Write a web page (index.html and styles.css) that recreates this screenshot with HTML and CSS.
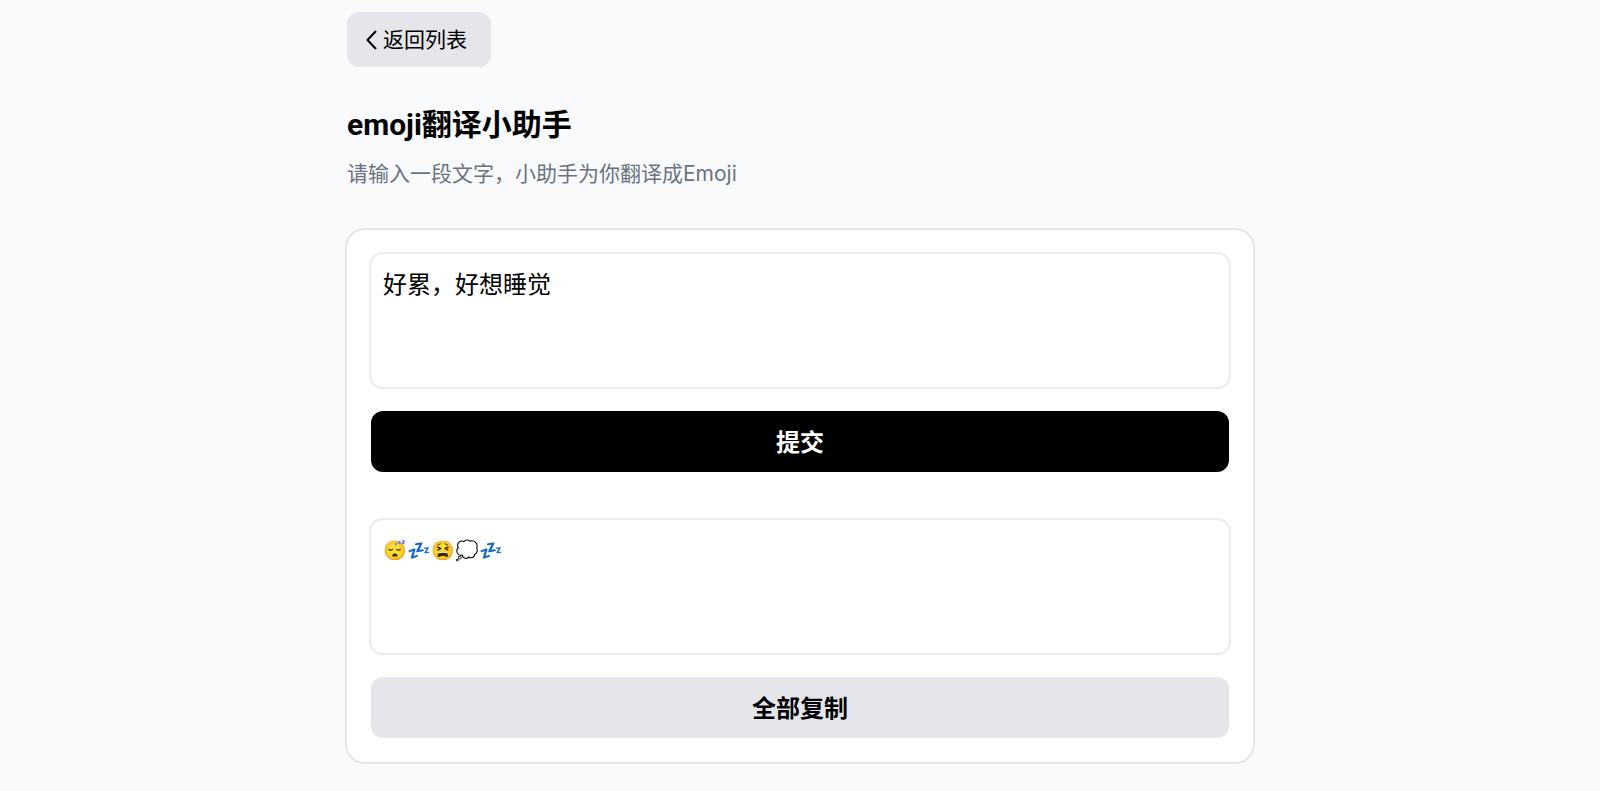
FILE: index.html
```html
<!DOCTYPE html>
<html lang="zh-CN">
<head>
<meta charset="utf-8">
<meta name="viewport" content="width=device-width, initial-scale=1">
<title>emoji翻译小助手</title>
<link rel="stylesheet" href="styles.css">
</head>
<body>
<main class="page">
  <button class="back" type="button">
    <svg class="back-icon" viewBox="0 0 12 20" aria-hidden="true"><path d="M10 1 1.500 10l8.500 9"/></svg>
    <span>返回列表</span>
  </button>
  <header class="intro">
    <h1 class="title">emoji翻译小助手</h1>
    <p class="subtitle">请输入一段文字，小助手为你翻译成Emoji</p>
  </header>
  <form class="card">
    <textarea class="field" aria-label="输入文字">好累，好想睡觉</textarea>
    <button class="action primary" type="button">提交</button>
    <textarea class="field result" aria-label="翻译结果" readonly>😴💤😫💭💤</textarea>
    <button class="action secondary" type="button">全部复制</button>
  </form>
</main>
</body>
</html>
```
FILE: styles.css
```css
* {
  box-sizing: border-box;
}

body {
  margin: 0;
  background: #f9fafc;
  color: #000;
  font-family: Inter, "Noto Sans CJK SC", sans-serif;
}

button,
textarea {
  font-family: inherit;
  color: inherit;
}

.page {
  max-width: 910px;
  margin: 0 auto;
  padding: 12px 0 26px;
}

.back {
  display: flex;
  align-items: center;
  gap: 5px;
  margin-left: 2px;
  padding: 13px 24px 12px 19px;
  border: 0;
  border-radius: 12px;
  background: #e5e6eb;
  font-size: 21px;
  line-height: 30px;
}

.back-icon {
  width: 12px;
  height: 20px;
  fill: none;
  stroke: #000;
  stroke-width: 2;
}

.intro {
  padding: 37px 2px 38px;
}

.title {
  margin: 0;
  font-family: Roboto, "Noto Sans CJK SC", sans-serif;
  font-size: 30px;
  font-weight: 700;
  line-height: 42px;
}

.subtitle {
  margin: 12px 0 0;
  color: #6b7280;
  font-size: 21px;
  line-height: 32px;
}

.card {
  display: flex;
  flex-direction: column;
  padding: 22px 22px 24px;
  border: 2px solid #e5e6e9;
  border-radius: 20px;
  background: #fff;
}

.field {
  height: 137px;
  padding: 13px 12px;
  border: 2px solid #ececee;
  border-radius: 14px;
  background: #fff;
  font-size: 24px;
  line-height: 36px;
  resize: none;
}

.action {
  margin: 22px 2px 0;
  padding: 13px 12px 11px;
  border: 0;
  border-radius: 12px;
  font-size: 24px;
  font-weight: 700;
  line-height: 37px;
}

.primary {
  background: #000;
  color: #fff;
}

.secondary {
  background: #e5e6eb;
}

.result {
  margin-top: 46px;
  font-size: 19px;
}
```
